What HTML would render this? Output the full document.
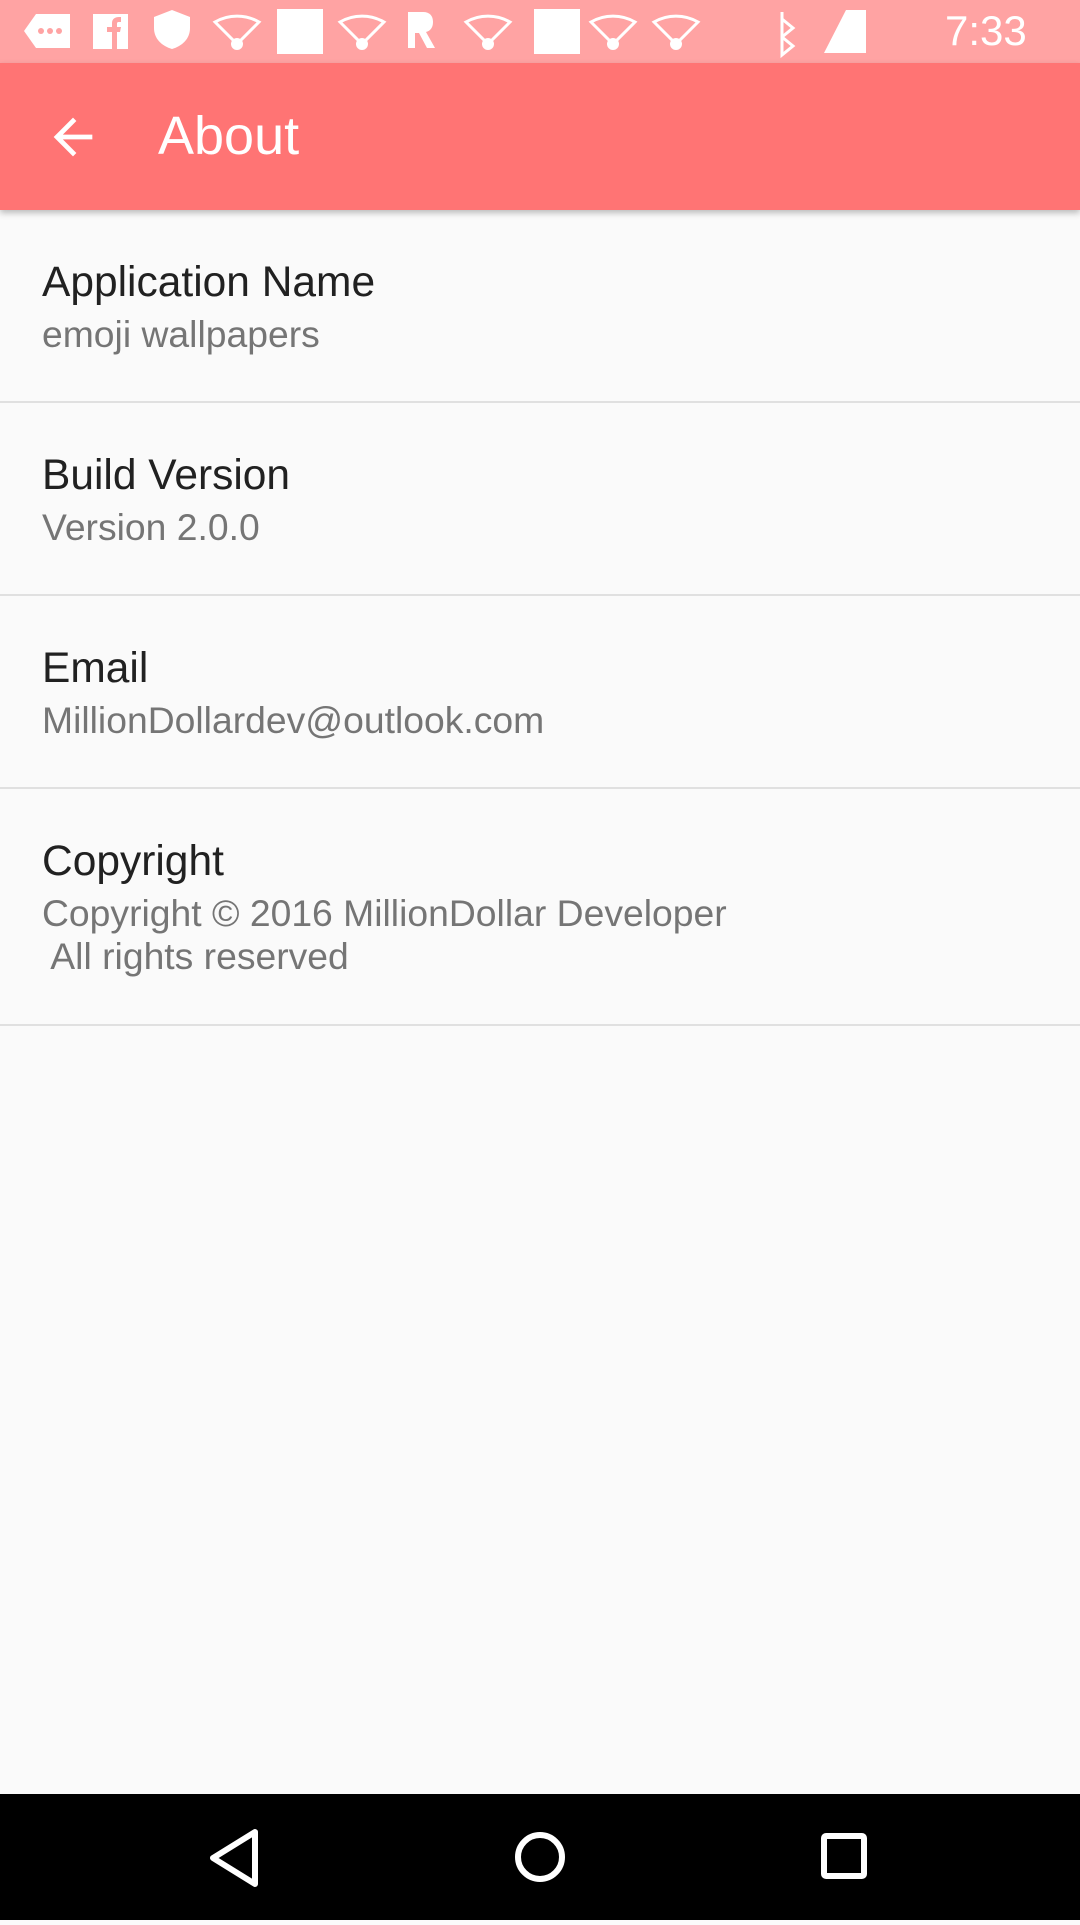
<!DOCTYPE html>
<html><head><meta charset="utf-8"><style>
*{margin:0;padding:0;box-sizing:border-box}
body{width:1080px;height:1920px;background:#fafafa;font-family:"Liberation Sans",sans-serif;position:relative;overflow:hidden}
.sb{position:absolute;top:0;left:0;width:1080px;height:63px;background:#ffa3a3}
.ab{position:absolute;top:63px;left:0;width:1080px;height:147px;background:#ff7474;box-shadow:0 3px 6px rgba(0,0,0,.25)}
.ab .t{position:absolute;left:158px;top:46px;font-size:54px;color:#fff;line-height:1}
.item{position:absolute;left:0;width:1080px;border-bottom:2px solid #e0e0e0}
.h{position:absolute;left:42px;font-size:42.5px;color:#212121;line-height:1}
.s{position:absolute;left:42px;font-size:37.3px;color:#757575;line-height:43px}
.nav{position:absolute;top:1794px;left:0;width:1080px;height:126px;background:#000}
</style></head><body>
<div class="sb">
<svg width="1080" height="63" style="position:absolute;left:0;top:0" fill="#fff">
<path d="M36 14h34v34H36l-12-17z"/><circle cx="41" cy="31" r="3" fill="#ffa3a3"/><circle cx="50" cy="31" r="3" fill="#ffa3a3"/><circle cx="59" cy="31" r="3" fill="#ffa3a3"/>
<rect x="93" y="14" width="35" height="35"/><path d="M112 49V32h-5v-5h5v-4c0-4 3-6 7-6h2v5h-2c-2 0-2 1-2 2v3h4l-1 5h-3v17z" fill="#ffa3a3"/>
<path d="M172 10l18 7v11c0 11-8 18-18 21-10-3-18-10-18-21V17z"/>
<rect x="277" y="9" width="46" height="45"/><rect x="534" y="9" width="46" height="45"/>
<g fill="none" stroke="#fff" stroke-width="3"><path d="M215 22a44 44 0 0 1 44 0l-22 22z"/><path d="M340 22a44 44 0 0 1 44 0l-22 22z"/><path d="M466 22a44 44 0 0 1 44 0l-22 22z"/><path d="M591 22a44 44 0 0 1 44 0l-22 22z"/><path d="M654 22a44 44 0 0 1 44 0l-22 22z"/></g>
<circle cx="237" cy="44" r="6"/><circle cx="362" cy="44" r="6"/><circle cx="488" cy="44" r="6"/><circle cx="613" cy="44" r="6"/><circle cx="676" cy="44" r="6"/>
<path d="M408 12h15c7 0 10 4 10 10s-3 9-7 10l9 16h-8l-8-15h-4v15h-7z"/>
<path d="M782 19l11 9-11 9M782 37l11 9-11 9V12" fill="none" stroke="#fff" stroke-width="3"/>
<path d="M846 10l20 0 0 43-42 0z"/>
<text x="945" y="45" font-size="42" font-family="Liberation Sans" fill="#fff">7:33</text>
</svg></div>
<div class="ab">
<svg style="position:absolute;left:44px;top:45px" width="58" height="58" viewBox="0 0 24 24"><path d="M20 11H7.8l5.6-5.6L12 4l-8 8 8 8 1.4-1.4L7.8 13H20z" fill="#fff"/></svg>
<div class="t">About</div></div>
<div class="item" style="top:210px;height:193px"><div class="h" style="top:52px">Application Name</div><div class="s" style="top:103px">emoji wallpapers</div></div>
<div class="item" style="top:403px;height:193px"><div class="h" style="top:52px">Build Version</div><div class="s" style="top:103px">Version 2.0.0</div></div>
<div class="item" style="top:596px;height:193px"><div class="h" style="top:52px">Email</div><div class="s" style="top:103px">MillionDollardev@outlook.com</div></div>
<div class="item" style="top:789px;height:237px"><div class="h" style="top:52px">Copyright</div><div class="s" style="top:103px;white-space:pre">Copyright © 2016 MillionDollar Developer
 All rights reserved</div></div>
<div class="nav"><svg width="1080" height="126">
<path d="M255 38v52l-42-26z" fill="none" stroke="#fff" stroke-width="6" stroke-linejoin="round"/>
<circle cx="540" cy="63" r="22" fill="none" stroke="#fff" stroke-width="6"/>
<rect x="824" y="42" width="40" height="40" fill="none" stroke="#fff" stroke-width="6" rx="2"/>
</svg></div>
</body></html>
